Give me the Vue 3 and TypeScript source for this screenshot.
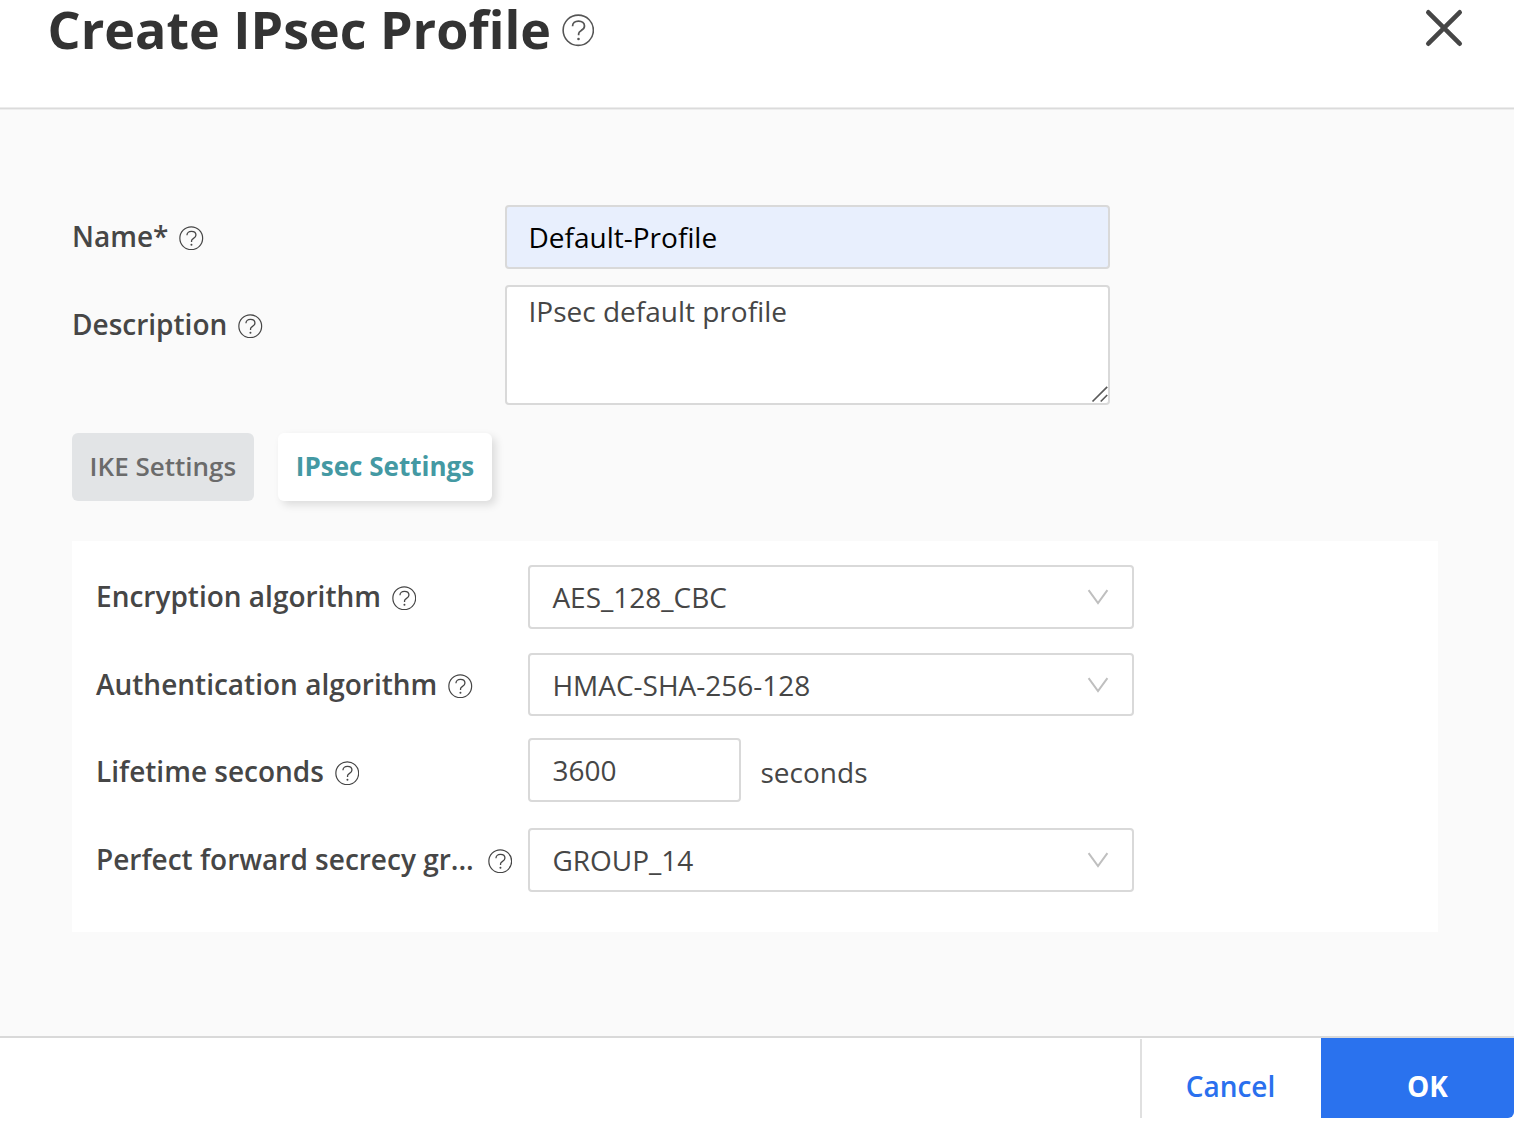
<script setup lang="ts">
import { defineComponent, h, ref } from 'vue'

const HelpIcon = defineComponent({
  name: 'HelpIcon',
  setup() {
    return () =>
      h('svg', { class: 'help', viewBox: '-12.25 -12.25 24.5 24.5', fill: 'none', stroke: 'currentColor' }, [
        h('circle', { r: 11.4, 'stroke-width': 1.2 }),
        h('path', {
          d: 'M-4.3 -3.1C-4.3 -5.4 -2.5 -6.9 0.2 -6.9C2.9 -6.9 4.7 -5.4 4.7 -3.2C4.7 -1.6 3.8 -.7 2.3 .1C.9 .9 .3 1.5 .3 2.6V3.7',
          'stroke-width': 1.3,
        }),
        h('circle', { cx: 0.2, cy: 6.6, r: 1, fill: 'currentColor', stroke: 'none' }),
      ])
  },
})

interface Algorithm {
  label: string
  value: string
}

const name = ref('Default-Profile')
const description = ref('IPsec default profile')
const lifetime = ref('3600')
const encryption: Algorithm = { label: 'Encryption algorithm', value: 'AES_128_CBC' }
const authentication: Algorithm = { label: 'Authentication algorithm', value: 'HMAC-SHA-256-128' }
const secrecy: Algorithm = { label: 'Perfect forward secrecy gr...', value: 'GROUP_14' }
</script>

<template>
  <div class="dialog">
    <header class="header">
      <h1 class="title">Create IPsec Profile</h1>
      <HelpIcon class="title-help" />
      <button class="close" aria-label="Close">
        <svg viewBox="0 0 38 38" width="38" height="38" fill="none" stroke="#464646" stroke-width="4.6" stroke-linecap="round">
          <path d="M3.3 3.3L34.7 34.7M34.7 3.3L3.3 34.7" />
        </svg>
      </button>
    </header>

    <main class="body">
      <div class="row row-name">
        <label class="label"><span>Name*</span><HelpIcon /></label>
        <input v-model="name" class="field name-field" type="text" />
      </div>
      <div class="row row-desc">
        <label class="label"><span>Description</span><HelpIcon /></label>
        <div class="area">
          <textarea v-model="description" class="field desc-field" spellcheck="false"></textarea>
          <svg class="grip" viewBox="0 0 18 18" width="18" height="18" fill="none" stroke="#5a5a5a" stroke-width="1.7">
            <path d="M1.5 16.5L16.2 1.8M9.7 16.5L16.2 10" />
          </svg>
        </div>
      </div>

      <div class="tabs">
        <button class="tab tab-ike">IKE Settings</button>
        <button class="tab tab-ipsec">IPsec Settings</button>
      </div>

      <section class="panel">
        <div class="row row-enc">
          <label class="label"><span>{{ encryption.label }}</span><HelpIcon /></label>
          <div class="field select">
            <span>{{ encryption.value }}</span>
            <svg class="chevron" viewBox="0 0 22 16"><path d="M1.6 1.2L11 14L20.4 1.2" /></svg>
          </div>
        </div>
        <div class="row row-auth">
          <label class="label"><span>{{ authentication.label }}</span><HelpIcon /></label>
          <div class="field select">
            <span>{{ authentication.value }}</span>
            <svg class="chevron" viewBox="0 0 22 16"><path d="M1.6 1.2L11 14L20.4 1.2" /></svg>
          </div>
        </div>
        <div class="row row-life">
          <label class="label"><span>Lifetime seconds</span><HelpIcon /></label>
          <input v-model="lifetime" class="field life-field" type="text" />
          <span class="unit">seconds</span>
        </div>
        <div class="row row-pfs">
          <label class="label"><span class="clipped">{{ secrecy.label }}</span><HelpIcon /></label>
          <div class="field select">
            <span>{{ secrecy.value }}</span>
            <svg class="chevron" viewBox="0 0 22 16"><path d="M1.6 1.2L11 14L20.4 1.2" /></svg>
          </div>
        </div>
      </section>
    </main>

    <footer class="footer">
      <button class="cancel">Cancel</button>
      <button class="ok">OK</button>
    </footer>
  </div>
</template>

<style>
body {
  background: #fff;
}
</style>

<style scoped>
.dialog {
  width: 1514px;
  height: 1118px;
  display: flex;
  flex-direction: column;
  font: 400 28px/38px "Open Sans", sans-serif;
  color: #464646;
}
.dialog *,
.dialog {
  box-sizing: border-box;
}
button {
  border: 0;
  margin: 0;
  padding: 0;
  background: none;
  font-family: inherit;
}
.header {
  display: flex;
  align-items: flex-start;
  height: 109px;
  padding-left: 47.6px;
  border-bottom: 1px solid #dbdbdb;
  box-shadow: inset 0 -1px 0 #ececec, 0 1px 0 #ededed;
  position: relative;
  z-index: 1;
}
.title {
  margin: 0;
  font-size: 52px;
  font-weight: 700;
  line-height: 57px;
  color: #333;
  white-space: nowrap;
}
.help {
  flex: none;
  width: 24.5px;
  height: 24.5px;
  display: block;
}
.title-help {
  width: 32.5px;
  height: 32.5px;
  margin: 14.4px 0 0 10.8px;
  color: #555;
}
.close {
  margin: 9px 51px 0 auto;
  width: 38px;
  height: 38px;
}
.close svg {
  display: block;
}
.body {
  flex: 1;
  background: #fafafa;
  padding: 96px 76px 0 72px;
}
.row {
  display: flex;
}
.label {
  flex: none;
  display: flex;
  align-items: center;
  gap: 11px;
  height: 64px;
  padding-bottom: 2px;
  font-weight: 600;
  white-space: nowrap;
}
.label .help {
  margin-top: 3.6px;
}
.field {
  border: 2px solid #d9d9d9;
  border-radius: 4px;
  background: #fff;
  font: inherit;
  color: #464646;
  outline: none;
}
.row-name .label,
.row-desc .label {
  width: 433px;
}
.name-field {
  width: 605px;
  height: 64px;
  padding: 0 21.5px;
  background: #e8effd;
  color: #000;
}
.row-desc {
  margin-top: 16px;
}
.row-desc .label {
  height: 80px;
}
.area {
  position: relative;
  width: 605px;
  height: 120px;
}
.desc-field {
  display: block;
  width: 100%;
  height: 100%;
  resize: none;
  overflow: hidden;
  padding: 5px 21.5px;
}
.grip {
  position: absolute;
  right: 1px;
  bottom: 2px;
}
.tabs {
  display: flex;
  gap: 24px;
  margin-top: 28px;
}
.tab {
  height: 68px;
  border-radius: 6px;
  font-size: 26px;
  line-height: 36px;
  padding-bottom: 3px;
  white-space: nowrap;
}
.tab-ike {
  width: 181.7px;
  background: #e2e4e6;
  color: #6b6b6b;
  font-weight: 600;
}
.tab-ipsec {
  width: 214.6px;
  background: #fff;
  color: #4499a3;
  font-weight: 700;
  box-shadow: 4px 4px 8px rgba(0, 0, 0, 0.12);
}
.panel {
  margin-top: 40px;
  height: 391px;
  padding: 24px;
  background: #fff;
}
.panel .label {
  width: 432px;
}
.clipped {
  width: 380.8px;
}
.row-auth {
  margin-top: 24px;
  height: 63px;
}
.row-life {
  margin-top: 22px;
  height: 64px;
}
.row-life .label {
  height: 66px;
  padding-bottom: 0;
}
.row-pfs {
  margin-top: 26px;
}
.select {
  width: 606px;
  display: flex;
  align-items: center;
  justify-content: space-between;
  padding: 0 23px 0 22.4px;
}
.row-enc .select,
.row-pfs .select {
  height: 64px;
}
.chevron {
  width: 22px;
  height: 16px;
  fill: none;
  stroke: #bfbfbf;
  stroke-width: 2;
}
.life-field {
  width: 213px;
  padding: 0 22.4px;
}
.unit {
  margin: 15px 0 0 19.5px;
}
.footer {
  height: 82px;
  border-top: 2px solid #d9d9d9;
  display: flex;
  justify-content: flex-end;
}
.footer button {
  font-size: 28px;
  line-height: 38px;
}
.footer .cancel {
  width: 181px;
  margin-top: 1px;
  border-left: 2px solid #e0e0e0;
  padding: 15px 2px 0 0;
  color: #2a70ee;
  font-weight: 600;
}
.ok {
  width: 193px;
  background: #2a72ee;
  border-bottom-right-radius: 6px;
  padding: 16px 0 0 20px;
  color: #fff;
  font-weight: 700;
}
</style>
